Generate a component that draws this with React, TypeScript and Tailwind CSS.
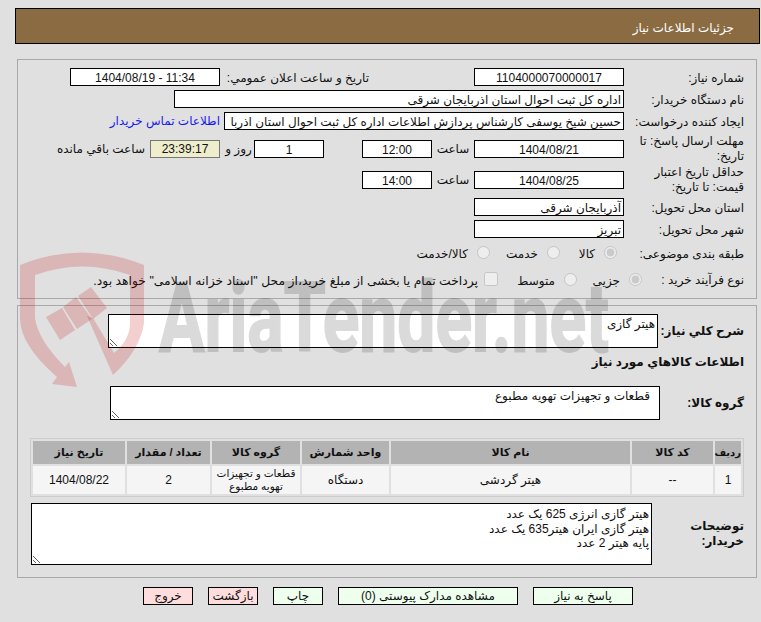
import React from 'react'

const COLS = [26, 81, 239, 87, 88, 83, 92]

const ITEM_HEADERS = ['ردیف', 'کد کالا', 'نام کالا', 'واحد شمارش', 'گروه کالا', 'تعداد / مقدار', 'تاریخ نیاز']

function Box({ w, children, center = true }: { w: string; children?: React.ReactNode; center?: boolean }) {
  return (
    <div className={`${w} h-[18px] shrink-0 border border-black bg-white leading-[18px] whitespace-nowrap overflow-hidden px-[2px] ${center ? 'text-center' : 'text-right'}`}>
      {children}
    </div>
  )
}

function Label({ children, w = 'w-[120px] pt-[3px]' }: { children: React.ReactNode; w?: string }) {
  return <div className={`${w} shrink-0 pl-[4px] leading-[14.5px]`}>{children}</div>
}

function Radio({ label, checked, w }: { label: string; checked?: boolean; w: string }) {
  return (
    <div className={`${w} flex items-center shrink-0`}>
      <input type="radio" disabled defaultChecked={checked} className="w-[13px] h-[13px] m-0" />
      <span className="mr-[9px] mt-[4px]">{label}</span>
    </div>
  )
}

function Watermark() {
  return (
    <svg dir="ltr" className="absolute left-0 top-0 pointer-events-none" width="761" height="622" viewBox="0 0 761 622">
      <g fill="#c00000" fillOpacity="0.19">
        <path d="M20 265 Q82 240 144 265 V323 Q140 350 113 375 L87 316 L93 318 L114 353 Q130 340 130 323 V275 Q82 258 35 275 V318 Q38 340 65 367 L69 362 L77 387 L52 384 L57 377 Q20 345 20 318 Z" />
        <path d="M46 317 L62 308 L75 330 L60 340 Z" />
        <path d="M63 307 L76 297 L92 319 L77 329 Z" />
        <path d="M78 296 L91 287 L107 308 L93 319 Z" />
      </g>
      <g opacity="0.14">
        <text x="159" y="351" fontSize="96" fontWeight="700" textLength="450" lengthAdjust="spacingAndGlyphs" fill="#000000" stroke="#000000" strokeWidth="2" style={{ fontFamily: 'Roboto, sans-serif', direction: 'ltr' }}>
          AriaTender.net
        </text>
      </g>
    </svg>
  )
}

export default function App() {
  return (
    <div dir="rtl" className="relative w-[761px] h-[622px] overflow-hidden bg-[#e0e0e0] text-[12px] text-[#111] font-['Liberation_Sans','DejaVu_Sans',sans-serif]">
      {/* Header */}
      <div className="mt-[8px] mr-[1px] ml-[15px] h-[36px] border border-black bg-[#8b6c42] pr-[25px] leading-[38px] text-white">
        جزئیات اطلاعات نیاز
      </div>

      {/* Main form */}
      <div className="mt-[15px] mr-[4px] ml-[17px] h-[240px] border border-[#a9a9a9] pr-[12px] pt-[8px]">
        <div className="flex items-center">
          <Label>شماره نیاز:</Label>
          <Box w="w-[150px]">1104000070000017</Box>
          <div className="mr-[105px] w-[149px] shrink-0 pt-[3px] leading-[14.5px]">تاریخ و ساعت اعلان عمومي:</div>
          <Box w="w-[150px]"><span dir="ltr">1404/08/19 - 11:34</span></Box>
        </div>
        <div className="flex items-center mt-[4px]">
          <Label>نام دستگاه خریدار:</Label>
          <Box w="w-[450px]" center={false}>اداره کل ثبت احوال استان اذربایجان شرقی</Box>
        </div>
        <div className="flex items-center mt-[4px]">
          <Label>ایجاد کننده درخواست:</Label>
          <Box w="w-[400px]" center={false}>حسین شیخ یوسفی کارشناس پردازش اطلاعات اداره کل ثبت احوال استان اذربا</Box>
          <a className="mr-[4px] whitespace-nowrap text-[#1a1aee]">اطلاعات تماس خریدار</a>
        </div>
        <div className="flex items-center mt-[4px]">
          <Label w="w-[120px]">مهلت ارسال پاسخ: تا تاریخ:</Label>
          <Box w="w-[150px]">1404/08/21</Box>
          <div className="w-[42px] text-center shrink-0">ساعت</div>
          <Box w="w-[70px]">12:00</Box>
          <div className="w-[38px] shrink-0" />
          <Box w="w-[70px]">1</Box>
          <div className="w-[34px] pl-[3px] text-center shrink-0">روز و</div>
          <div className="w-[70px] h-[18px] shrink-0 border border-[#777] bg-[#eeeecc] text-center leading-[17px]">23:39:17</div>
          <div className="mr-[5px] whitespace-nowrap">ساعت باقي مانده</div>
        </div>
        <div className="flex items-center mt-[2px]">
          <Label w="w-[120px]">حداقل تاریخ اعتبار قیمت: تا تاریخ:</Label>
          <Box w="w-[150px]">1404/08/25</Box>
          <div className="w-[42px] text-center shrink-0">ساعت</div>
          <Box w="w-[70px]">14:00</Box>
        </div>
        <div className="flex items-center mt-[4px]">
          <Label>استان محل تحویل:</Label>
          <Box w="w-[150px]" center={false}>آذربایجان شرقی</Box>
        </div>
        <div className="flex items-center mt-[4px]">
          <Label>شهر محل تحویل:</Label>
          <Box w="w-[150px]" center={false}>تبریز</Box>
        </div>
        <div className="flex items-center mt-[7px] h-[14px]">
          <Label w="w-[120px] mt-[4px]">طبقه بندی موضوعی:</Label>
          <Radio label="کالا" checked w="w-[64px] pr-[7px]" />
          <Radio label="خدمت" w="w-[70px]" />
          <Radio label="کالا/خدمت" w="w-[80px]" />
        </div>
        <div className="flex items-center mt-[13px] h-[14px]">
          <Label w="w-[102px] mt-[2px]">نوع فرآیند خرید :</Label>
          <Radio label="جزیی" checked w="w-[65px]" />
          <Radio label="متوسط" w="w-[79px]" />
          <div className="flex items-center whitespace-nowrap">
            <input type="checkbox" disabled className="w-[14px] h-[14px] m-0" />
            <span className="mr-[6px] mt-[4px] text-[12.35px]">پرداخت تمام یا بخشی از مبلغ خرید،از محل "اسناد خزانه اسلامی" خواهد بود.</span>
          </div>
        </div>
      </div>

      {/* Items */}
      <div className="mt-[6px] mr-[4px] ml-[17px] h-[273px] border border-[#a9a9a9] pr-[12px] pt-[8px]">
        <div className="flex items-center">
          <div className="w-[86px] shrink-0 font-bold">شرح کلي نیاز:</div>
          <textarea readOnly defaultValue="هیتر گازی" className="block w-[550px] h-[34px] border border-black bg-white px-[2px] py-[2px] leading-[15px] outline-none" />
        </div>
        <div className="mt-[7px] font-bold leading-[14px]">اطلاعات کالاهاي مورد نیاز</div>
        <div className="flex items-center mt-[17px]">
          <div className="w-[84px] shrink-0 font-bold">گروه کالا:</div>
          <textarea readOnly defaultValue="قطعات و تجهیزات تهویه مطبوع" className="block w-[550px] h-[34px] border border-black bg-white px-[9px] py-[2px] leading-[15px] outline-none" />
        </div>
        <table className="mt-[18px] w-[713px] table-fixed border-separate border-spacing-[2px] border border-[#cccccc]">
          <colgroup>
            {COLS.map((w, i) => <col key={i} style={{ width: w }} />)}
          </colgroup>
          <thead>
            <tr>
              {ITEM_HEADERS.map((h, i) => (
                <th key={h} className={`h-[23px] bg-[#b3b3b3] p-0 text-center font-bold whitespace-nowrap ${i === 0 ? 'text-[10px]' : 'text-[11px]'}`}>{h}</th>
              ))}
            </tr>
          </thead>
          <tbody>
            <tr className="text-center leading-[13px]">
              <td className="h-[28px] bg-[#f5f5f5] p-0">1</td>
              <td className="bg-[#f5f5f5] p-0">--</td>
              <td className="bg-[#f5f5f5] p-0">هیتر گردشی</td>
              <td className="bg-[#f5f5f5] p-0">دستگاه</td>
              <td className="bg-[#f5f5f5] p-0 text-[10.5px] whitespace-nowrap">قطعات و تجهیزات<br />تهویه مطبوع</td>
              <td className="bg-[#f5f5f5] p-0">2</td>
              <td className="bg-[#f5f5f5] p-0">1404/08/22</td>
            </tr>
          </tbody>
        </table>
        <div className="flex items-center mt-[6px]">
          <div className="w-[92px] shrink-0 font-bold leading-[15px] pl-[30px]">توضیحات خریدار:</div>
          <textarea
            readOnly
            defaultValue={'هیتر گازی انرژی 625 یک عدد\nهیتر گازی ایران هیتر635 یک عدد\nپایه هیتر 2 عدد'}
            className="block w-[621px] h-[62px] border border-black bg-white px-[2px] py-[3px] leading-[14.5px] outline-none"
          />
        </div>
      </div>

      {/* Actions */}
      <div className="flex mt-[9px] mr-[128px] gap-[15px]">
        <button className="w-[100px] h-[18px] border border-black bg-[#eeffee] leading-[15px]">پاسخ به نیاز</button>
        <button className="w-[180px] h-[18px] border border-black bg-[#eeffee] leading-[15px]">مشاهده مدارک پیوستی (0)</button>
        <button className="w-[50px] h-[18px] border border-black bg-[#eeffee] leading-[15px]">چاپ</button>
        <button className="w-[50px] h-[18px] border border-black bg-[#ffdddd] leading-[15px]">بازگشت</button>
        <button className="w-[50px] h-[18px] border border-black bg-[#ffdddd] leading-[15px]">خروج</button>
      </div>

      <Watermark />
    </div>
  )
}
